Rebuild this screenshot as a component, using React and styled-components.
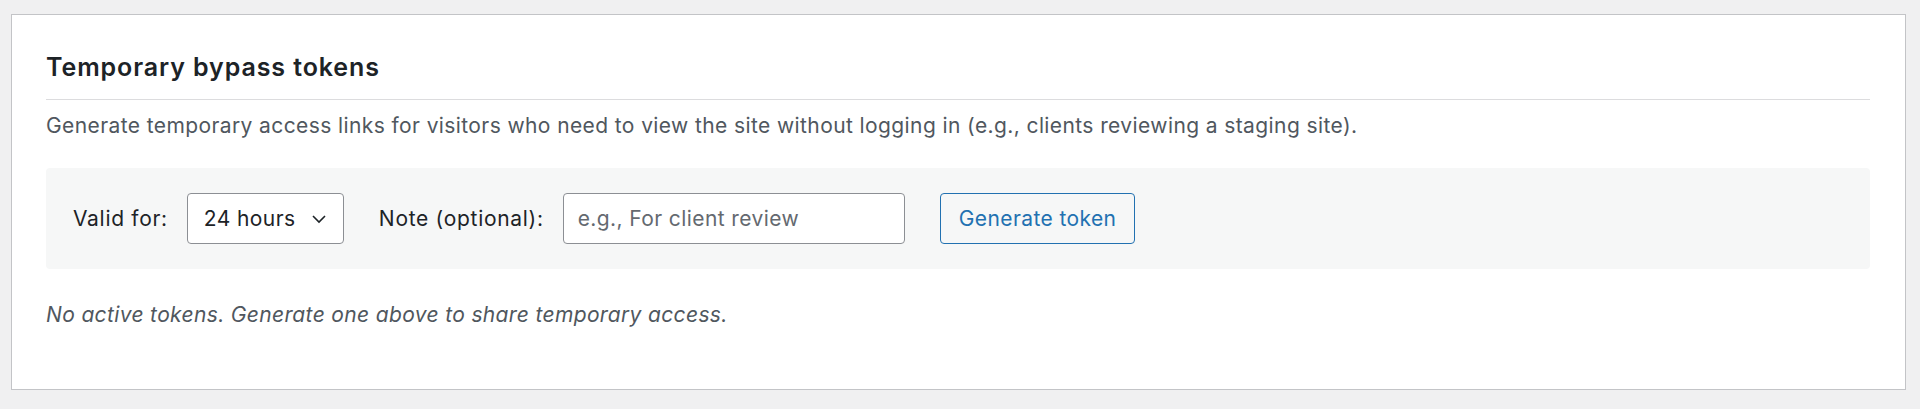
import { useState } from 'react';
import styled, { createGlobalStyle } from 'styled-components';

const GlobalStyle = createGlobalStyle`
  html, body {
    margin: 0;
    padding: 0;
    background: #f0f0f1;
    font-family: Inter, "Noto Sans", "Liberation Sans", sans-serif;
    color: #1d2327;
  }
`;

const Page = styled.div`
  padding: 14px 14px 19px 11px;
`;

const Card = styled.section`
  background: #fff;
  border: 1px solid #c3c4c7;
  padding: 37px 35px 61px 34px;
`;

const Title = styled.h2`
  margin: 0;
  font-size: 25px;
  line-height: 30px;
  font-weight: 600;
  letter-spacing: 0.9px;
  color: #1d2327;
  padding-bottom: 17px;
  border-bottom: 1px solid #dcdcde;
`;

const Description = styled.p`
  margin: 13px 0 0;
  font-size: 21px;
  line-height: 26px;
  letter-spacing: 0.4px;
  color: #50575e;
`;

const Toolbar = styled.div`
  margin-top: 29px;
  background: #f6f7f7;
  border-radius: 4px;
  padding: 25px 27px;
  display: flex;
  align-items: center;
  gap: 35px;
`;

const Field = styled.label`
  display: flex;
  align-items: center;
  gap: 19px;
  font-size: 21px;
  letter-spacing: 0.7px;
  color: #1d2327;
`;

const SelectBox = styled.div`
  width: 157px;
  height: 51px;
  box-sizing: border-box;
  border: 1px solid #8c8f94;
  border-radius: 4px;
  background: #fff;
  display: flex;
  align-items: center;
  justify-content: space-between;
  padding: 0 16px;
  font-size: 21px;
  letter-spacing: 0.4px;
  color: #1d2327;
`;

const TextInput = styled.input`
  width: 342px;
  height: 51px;
  box-sizing: border-box;
  border: 1px solid #8c8f94;
  border-radius: 4px;
  background: #fff;
  padding: 0 14px;
  font-family: inherit;
  font-size: 21px;
  letter-spacing: 0.4px;
  color: #1d2327;
  outline: none;
  &::placeholder {
    color: #646970;
  }
`;

const Button = styled.button`
  height: 51px;
  box-sizing: border-box;
  border: 1px solid #2271b1;
  border-radius: 4px;
  background: #f6f7f7;
  color: #2271b1;
  padding: 0 18px;
  font-family: inherit;
  font-size: 21px;
  letter-spacing: 0.4px;
  cursor: pointer;
`;

const Empty = styled.p`
  margin: 33px 0 0;
  font-size: 21px;
  line-height: 26px;
  letter-spacing: 0.35px;
  font-style: italic;
  color: #50575e;
`;

function Chevron() {
  return (
    <svg width="16" height="10" viewBox="0 0 16 10" fill="none">
      <path d="M2 2l6 6 6-6" stroke="#1d2327" strokeWidth="1.6" />
    </svg>
  );
}

export default function App() {
  const [note, setNote] = useState('');

  return (
    <>
      <GlobalStyle />
      <Page>
        <Card>
          <Title>Temporary bypass tokens</Title>
          <Description>
            Generate temporary access links for visitors who need to view the site without logging in (e.g., clients reviewing a staging site).
          </Description>
          <Toolbar>
            <Field>
              Valid for:
              <SelectBox>
                24 hours
                <Chevron />
              </SelectBox>
            </Field>
            <Field>
              Note (optional):
              <TextInput
                placeholder="e.g., For client review"
                value={note}
                onChange={(e) => setNote(e.target.value)}
              />
            </Field>
            <Button type="button">Generate token</Button>
          </Toolbar>
          <Empty>No active tokens. Generate one above to share temporary access.</Empty>
        </Card>
      </Page>
    </>
  );
}
